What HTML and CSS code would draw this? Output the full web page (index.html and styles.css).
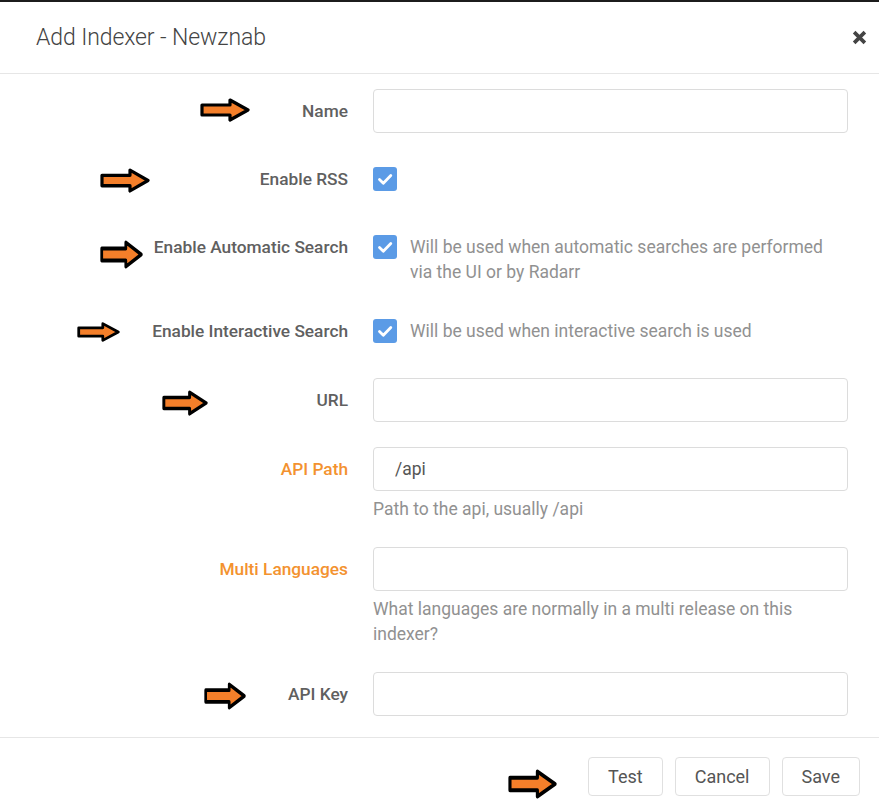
FILE: index.html
```html
<!DOCTYPE html>
<html>
<head>
<meta charset="utf-8">
<title>Add Indexer - Newznab</title>
<link rel="stylesheet" href="styles.css">
</head>
<body>
<div class="modal">
  <div class="modal-header">
    <h1 class="modal-title">Add Indexer - Newznab</h1>
    <button class="close" aria-label="Close">
      <svg viewBox="0 0 14 14" width="15" height="15"><path d="M2 2 L12 12 M12 2 L2 12" stroke="#444" stroke-width="3.4" stroke-linecap="butt"/></svg>
    </button>
  </div>
  <div class="modal-body">
    <div class="form-group">
      <label class="form-label">Name</label>
      <div class="form-input"><input class="text-input" type="text"></div>
    </div>
    <div class="form-group check-group">
      <label class="form-label">Enable RSS</label>
      <div class="form-input check-input"><span class="checkbox"><svg viewBox="0 0 24 24" width="24" height="24"><path d="M6.5 12.5 L10.3 16.2 L17.8 8.5" fill="none" stroke="#fff" stroke-width="2.8" stroke-linecap="round" stroke-linejoin="round"/></svg></span></div>
    </div>
    <div class="form-group check-group">
      <label class="form-label">Enable Automatic Search</label>
      <div class="form-input check-input"><span class="checkbox"><svg viewBox="0 0 24 24" width="24" height="24"><path d="M6.5 12.5 L10.3 16.2 L17.8 8.5" fill="none" stroke="#fff" stroke-width="2.8" stroke-linecap="round" stroke-linejoin="round"/></svg></span><span class="check-help">Will be used when automatic searches are performed via the UI or by Radarr</span></div>
    </div>
    <div class="form-group check-group">
      <label class="form-label">Enable Interactive Search</label>
      <div class="form-input check-input"><span class="checkbox"><svg viewBox="0 0 24 24" width="24" height="24"><path d="M6.5 12.5 L10.3 16.2 L17.8 8.5" fill="none" stroke="#fff" stroke-width="2.8" stroke-linecap="round" stroke-linejoin="round"/></svg></span><span class="check-help">Will be used when interactive search is used</span></div>
    </div>
    <div class="form-group">
      <label class="form-label">URL</label>
      <div class="form-input"><input class="text-input" type="text"></div>
    </div>
    <div class="form-group">
      <label class="form-label advanced">API Path</label>
      <div class="form-input"><input class="text-input" type="text" value="/api"><div class="help-text">Path to the api, usually /api</div></div>
    </div>
    <div class="form-group">
      <label class="form-label advanced">Multi Languages</label>
      <div class="form-input"><input class="text-input" type="text"><div class="help-text">What languages are normally in a multi release on this indexer?</div></div>
    </div>
    <div class="form-group">
      <label class="form-label">API Key</label>
      <div class="form-input"><input class="text-input" type="text"></div>
    </div>
  </div>
  <div class="modal-footer">
    <button class="btn">Test</button>
    <button class="btn">Cancel</button>
    <button class="btn">Save</button>
  </div>

  <svg class="arrow a1" viewBox="0 0 50 24" preserveAspectRatio="none"><path d="M2 7 H30 V2 L48 12 L30 22 V17 H2 Z" fill="#f47f2a" stroke="#000" stroke-width="3.2" stroke-linejoin="round"/></svg>
  <svg class="arrow a2" viewBox="0 0 50 24" preserveAspectRatio="none"><path d="M2 7 H30 V2 L48 12 L30 22 V17 H2 Z" fill="#f47f2a" stroke="#000" stroke-width="3.2" stroke-linejoin="round"/></svg>
  <svg class="arrow a3" viewBox="0 0 50 24" preserveAspectRatio="none"><path d="M2 7 H30 V2 L48 12 L30 22 V17 H2 Z" fill="#f47f2a" stroke="#000" stroke-width="3.2" stroke-linejoin="round"/></svg>
  <svg class="arrow a4" viewBox="0 0 50 24" preserveAspectRatio="none"><path d="M2 7 H30 V2 L48 12 L30 22 V17 H2 Z" fill="#f47f2a" stroke="#000" stroke-width="3.2" stroke-linejoin="round"/></svg>
  <svg class="arrow a5" viewBox="0 0 50 24" preserveAspectRatio="none"><path d="M2 7 H30 V2 L48 12 L30 22 V17 H2 Z" fill="#f47f2a" stroke="#000" stroke-width="3.2" stroke-linejoin="round"/></svg>
  <svg class="arrow a6" viewBox="0 0 50 24" preserveAspectRatio="none"><path d="M2 7 H30 V2 L48 12 L30 22 V17 H2 Z" fill="#f47f2a" stroke="#000" stroke-width="3.2" stroke-linejoin="round"/></svg>
  <svg class="arrow a7" viewBox="0 0 50 24" preserveAspectRatio="none"><path d="M2 7 H30 V2 L48 12 L30 22 V17 H2 Z" fill="#f47f2a" stroke="#000" stroke-width="3.2" stroke-linejoin="round"/></svg>
</div>
</body>
</html>
```

FILE: styles.css
```css
* { box-sizing: border-box; }
html, body { margin: 0; padding: 0; background: #fff; }
body {
  font-family: Roboto, "Liberation Sans", sans-serif;
  color: #555;
  width: 879px;
  height: 807px;
  overflow: hidden;
}
.modal {
  position: relative;
  border-top: 2px solid #1c1c1c;
  height: 807px;
}
.modal-header {
  height: 72px;
  display: flex;
  align-items: center;
  justify-content: space-between;
  padding: 0 12px 0 36px;
  border-bottom: 1px solid #e6e6e6;
}
.modal-title {
  margin: 0;
  font-weight: 300;
  font-size: 23px;
  color: #444;
  letter-spacing: -0.1px;
}
.close {
  background: none;
  border: 0;
  padding: 0;
  width: 15px;
  height: 15px;
  display: flex;
}
.modal-body {
  padding: 15px 31px 21px 0;
}
.form-group {
  display: flex;
  margin-bottom: 25px;
}
.form-group:last-child { margin-bottom: 0; }
.form-label {
  width: 348px;
  flex: none;
  text-align: right;
  font-size: 17.3px;
  font-weight: 500;
  color: #606060;
  line-height: 44px;
}
.form-label.advanced { color: #f3922f; }
.form-input {
  flex: 1;
  margin-left: 25px;
}
.text-input {
  display: block;
  width: 100%;
  height: 44px;
  border: 1px solid #dcdcdc;
  border-radius: 4px;
  padding: 0 21px;
  font-family: Roboto, "Liberation Sans", sans-serif;
  font-size: 17.5px;
  color: #555;
  outline: none;
  background: #fff;
}
.help-text {
  margin-top: 6px;
  font-size: 17.5px;
  line-height: 25px;
  color: #919191;
  padding-right: 40px;
}
.check-group .form-label {
  line-height: 25px;
  padding-top: 9px;
}
.check-input {
  display: flex;
  align-items: flex-start;
  padding-top: 9px;
  min-height: 43px;
}
.checkbox {
  flex: none;
  width: 24px;
  height: 24px;
  border-radius: 3px;
  background: #5b9be6;
  display: block;
}
.checkbox svg { display: block; }
.check-help {
  margin-left: 13px;
  font-size: 17.5px;
  line-height: 25px;
  color: #919191;
  padding-right: 20px;
}
.modal-footer {
  border-top: 1px solid #e6e6e6;
  display: flex;
  justify-content: flex-end;
  gap: 12px;
  padding: 19px 19px 0 0;
}
.btn {
  height: 39px;
  padding: 0 19px;
  border: 1px solid #e0e0e0;
  border-radius: 4px;
  background: #fff;
  font-family: Roboto, "Liberation Sans", sans-serif;
  font-size: 18px;
  color: #555;
}
.arrow {
  position: absolute;
  display: block;
}
.a1 { left: 200px; top: 96px; width: 50px; height: 24px; }
.a2 { left: 100px; top: 166px; width: 50px; height: 25px; }
.a3 { left: 100px; top: 238px; width: 43px; height: 29px; }
.a4 { left: 77px; top: 320px; width: 43px; height: 20px; }
.a5 { left: 162px; top: 388px; width: 46px; height: 26px; }
.a6 { left: 204px; top: 680px; width: 42px; height: 28px; }
.a7 { left: 508px; top: 767px; width: 49px; height: 30px; }
```
